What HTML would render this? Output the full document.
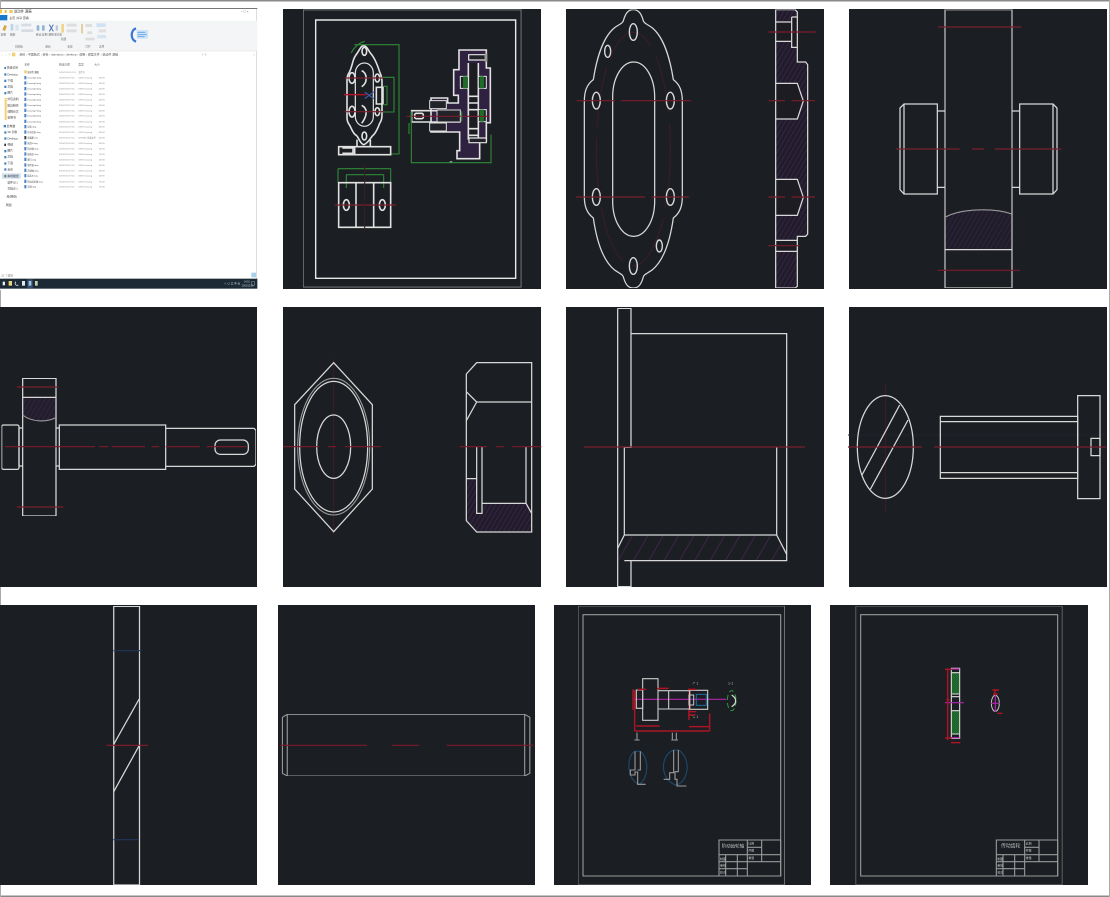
<!DOCTYPE html>
<html lang="zh"><head><meta charset="utf-8"><title>CAD</title>
<style>
html,body{margin:0;padding:0;background:#fff;width:1110px;height:897px;overflow:hidden}
svg{display:block;font-family:"Liberation Sans","Noto Sans CJK SC",sans-serif}
g.p *{vector-effect:non-scaling-stroke}
.bg{fill:#1b1e22}
.w{fill:none;stroke:#d8d8d8;stroke-width:1.25}
.g{fill:none;stroke:#9a9a9a;stroke-width:1.1}
.r{fill:none;stroke:#7a1c2c;stroke-width:1.2}
.rd{fill:none;stroke:#3a1f28;stroke-width:1.1}
.gn{fill:none;stroke:#2d8a35;stroke-width:1.1}
.b{fill:none;stroke:#24365e;stroke-width:1.2}
.blu{fill:none;stroke:#1d4a6e;stroke-width:1.1}
.m{fill:none;stroke:#b024a8;stroke-width:1.2}
.rb{fill:none;stroke:#a81226;stroke-width:1.5}
.h{fill:url(#hatch)}
.t{fill:#555;font-size:6.5px}
.t2{fill:#888;font-size:6.5px}
.tb{fill:#bbb;font-size:7.5px}
.p2 .w{stroke-width:1.6;stroke:#e2e2e2}
</style></head><body>
<svg width="1110" height="897" viewBox="0 0 1110 897" xmlns="http://www.w3.org/2000/svg">
<defs>
<pattern id="hatch" width="14" height="14" patternUnits="userSpaceOnUse" patternTransform="skewX(-30)"><rect width="14" height="14" fill="#221c2c"/><line x1="4" y1="0" x2="4" y2="14" stroke="#352646" stroke-width="3"/></pattern>
<pattern id="hatch2" width="46" height="46" patternUnits="userSpaceOnUse" patternTransform="skewX(-30)"><line x1="4" y1="0" x2="4" y2="46" stroke="#43264e" stroke-width="3"/></pattern>
<pattern id="gh" width="7" height="7" patternUnits="userSpaceOnUse"><rect width="7" height="7" fill="#1a5c28"/><path d="M0 7L7 0" stroke="#2c8a3c" stroke-width="1.5"/></pattern>
<filter id="bl" x="0" y="0" width="100%" height="100%"><feGaussianBlur stdDeviation="0.35"/></filter>
<filter id="bl2" x="0" y="0" width="100%" height="100%"><feGaussianBlur stdDeviation="0.3"/></filter>
</defs>
<rect width="1110" height="897" fill="#fff"/>
<!-- outer frame -->
<rect x="0" y="0" width="1110" height="1.5" fill="#8a8a8a"/>
<rect x="0" y="895.5" width="1110" height="1.5" fill="#8a8a8a"/>
<rect x="0" y="0" width="1" height="897" fill="#aaa"/>
<rect x="1109" y="0" width="1" height="897" fill="#aaa"/>

<!-- panels -->
<rect class="bg" x="283" y="9" width="258" height="280"/>
<rect class="bg" x="566" y="9" width="258" height="280"/>
<rect class="bg" x="849" y="9" width="258" height="280"/>
<rect class="bg" x="0" y="307" width="257" height="280"/>
<rect class="bg" x="283" y="307" width="258" height="280"/>
<rect class="bg" x="566" y="307" width="258" height="280"/>
<rect class="bg" x="849" y="307" width="258" height="280"/>
<rect class="bg" x="0" y="605" width="257" height="280"/>
<rect class="bg" x="278" y="605" width="257" height="280"/>
<rect class="bg" x="554" y="605" width="257" height="280"/>
<rect class="bg" x="830" y="605" width="258" height="280"/>

<!-- P1 explorer -->
<g transform="scale(.33333)" filter="url(#bl)">
<rect x="0" y="24" width="772" height="846" fill="#fff"/>
<rect x="0" y="24" width="772" height="3" fill="#777"/>
<rect x="768" y="27" width="3" height="810" fill="#ddd"/>
<rect x="0" y="28" width="6" height="12" fill="#f3c744"/><rect x="14" y="30" width="6" height="9" fill="#e9b83a"/><rect x="28" y="30" width="10" height="9" fill="#f1c75a"/>
<text x="42" y="38" style="font-size:10px;fill:#333">说动件 源稿</text>
<text x="722" y="38" style="font-size:9px;fill:#666">− ☐ ×</text>
<rect x="0" y="45" width="22" height="16" fill="#1979ca"/>
<text x="28" y="57" style="font-size:9px;fill:#444">主页 共享 查看</text>
<rect x="0" y="62" width="772" height="90" fill="#f4f5f6"/>
<rect x="0" y="152" width="772" height="2" fill="#e4e4e4"/>
<rect x="10" y="76" width="8" height="16" fill="#d9a441" transform="rotate(20 14 84)"/>
<rect x="32" y="72" width="8" height="20" fill="#bcd3ea"/><rect x="46" y="74" width="10" height="18" fill="#d7e4f1"/>
<rect x="64" y="71" width="30" height="8" fill="#d5dce4"/><rect x="64" y="88" width="36" height="8" fill="#d5dce4"/>
<rect x="110" y="76" width="8" height="16" fill="#8fb4d8"/><rect x="126" y="76" width="8" height="16" fill="#8fb4d8"/>
<path d="M148 74L160 94M160 74L148 94" stroke="#4a6fb0" stroke-width="3" fill="none"/>
<rect x="167" y="76" width="7" height="16" fill="#b9c9d9"/>
<rect x="184" y="72" width="8" height="26" fill="#f0d58a"/>
<rect x="200" y="71" width="30" height="9" fill="#dedede"/><rect x="200" y="88" width="30" height="9" fill="#dedede"/>
<rect x="243" y="72" width="6" height="28" fill="#e5cfa0"/>
<rect x="256" y="72" width="20" height="9" fill="#ddd"/><rect x="262" y="94" width="14" height="8" fill="#ddd"/><rect x="256" y="113" width="28" height="8" fill="#ddd"/>
<rect x="289" y="70" width="28" height="11" fill="#cfe2f4"/><rect x="296" y="88" width="22" height="9" fill="#e0e0e0"/><rect x="292" y="105" width="26" height="10" fill="#d8e4ee"/>
<text x="2" y="106" style="font-size:8px;fill:#666">复制</text><text x="30" y="106" style="font-size:8px;fill:#666">粘贴</text><text x="108" y="106" style="font-size:8px;fill:#666">移动 复制</text><text x="146" y="106" style="font-size:8px;fill:#666">删除</text><text x="163" y="106" style="font-size:8px;fill:#666">重命名</text><text x="183" y="120" style="font-size:8px;fill:#666">新建</text>
<text x="45" y="142" style="font-size:8px;fill:#777">剪贴板</text><text x="136" y="142" style="font-size:8px;fill:#777">组织</text><text x="202" y="142" style="font-size:8px;fill:#777">新建</text><text x="256" y="142" style="font-size:8px;fill:#777">打开</text><text x="297" y="142" style="font-size:8px;fill:#777">选择</text>
<!-- logo -->
<path d="M408 85C392 90 390 118 408 125" fill="none" stroke="#3a78d8" stroke-width="7"/>
<rect x="410" y="90" width="34" height="26" fill="#cfe3f6"/><path d="M412 97h24M412 104h28M412 110h22" stroke="#5ba2e0" stroke-width="2.5"/>
<!-- address -->
<text x="4" y="167" style="font-size:8px;fill:#999">← → ∨ ↑</text>
<rect x="36" y="158" width="10" height="11" fill="#f3d070"/>
<text x="58" y="167" style="font-size:9px;fill:#555">资料 › 中国版式 › 资料 › damiaotu › desktop › 说明 › 模型文件 › 说动件 源稿</text>
<text x="604" y="167" style="font-size:8px;fill:#888">∨ ↻</text><text x="760" y="167" style="font-size:8px;fill:#888">⌕</text>
<!-- sidebar -->
<rect x="6" y="520" width="56" height="16" fill="#cfe0ee"/>
<g style="font-size:8.5px;fill:#444">
<text x="20" y="206">快速访问</text><text x="22" y="226">Desktop</text><text x="22" y="244">下载</text><text x="22" y="262">文档</text><text x="22" y="281">图片</text><text x="22" y="300">外包资料</text><text x="22" y="319">模具制作</text><text x="22" y="337">课程论文</text><text x="22" y="355">说明书</text><text x="20" y="381">此电脑</text><text x="22" y="399">3D 对象</text><text x="22" y="418">Desktop</text><text x="22" y="436">视频</text><text x="22" y="455">图片</text><text x="22" y="473">文档</text><text x="22" y="492">下载</text><text x="22" y="511">音乐</text><text x="22" y="531">本地磁盘</text><text x="22" y="550">软件(D:)</text><text x="22" y="568">文档(E:)</text><text x="20" y="593">库(网络)</text><text x="18" y="618">网络</text>
</g>
<g fill="#3f7fc4"><rect x="13" y="201" width="5" height="6"/><rect x="13" y="220" width="6" height="7"/><rect x="13" y="239" width="6" height="7"/><rect x="13" y="257" width="6" height="7"/><rect x="13" y="276" width="6" height="7"/><rect x="11" y="375" width="7" height="7"/><rect x="13" y="394" width="6" height="7"/><rect x="13" y="412" width="6" height="7"/><rect x="13" y="431" width="5" height="7" fill="#333"/><rect x="13" y="450" width="6" height="7"/><rect x="13" y="468" width="6" height="7"/><rect x="13" y="487" width="6" height="7"/><rect x="13" y="505" width="6" height="7"/><rect x="13" y="525" width="6" height="7" fill="#777"/></g>
<g fill="#f3d070"><rect x="14" y="294" width="6" height="66"/></g>
<!-- columns -->
<g style="font-size:8px;fill:#666"><text x="73" y="196">名称</text><text x="177" y="196">修改日期</text><text x="235" y="196">类型</text><text x="283" y="196">大小</text></g>
<rect x="73" y="211" width="7" height="9" fill="#f3c95e"/>
<g fill="#4d84c8"><rect x="73" y="228" width="6" height="10"/><rect x="73" y="244" width="6" height="10"/><rect x="73" y="261" width="6" height="10"/><rect x="73" y="277" width="6" height="10"/><rect x="73" y="293" width="6" height="10"/><rect x="73" y="310" width="6" height="10"/><rect x="73" y="326" width="6" height="10"/><rect x="73" y="342" width="6" height="10"/><rect x="73" y="359" width="6" height="10"/><rect x="73" y="375" width="6" height="10"/><rect x="73" y="391" width="6" height="10"/><rect x="73" y="408" width="6" height="10" fill="#444"/><rect x="73" y="424" width="6" height="10"/><rect x="73" y="441" width="6" height="10"/><rect x="73" y="457" width="6" height="10"/><rect x="73" y="473" width="6" height="10"/><rect x="73" y="490" width="6" height="10"/><rect x="73" y="506" width="6" height="10"/><rect x="73" y="522" width="6" height="10"/><rect x="73" y="539" width="6" height="10"/><rect x="73" y="555" width="6" height="10"/></g>
<g class="t"><text x="82" y="219" style="fill:#333">说动件 源稿</text><text x="82" y="236">Drawing1.dwg</text><text x="82" y="252">Drawing2.dwg</text><text x="82" y="269">Drawing3.dwg</text><text x="82" y="285">Drawing4.dwg</text><text x="82" y="301">Drawing5.dwg</text><text x="82" y="318">Drawing6.dwg</text><text x="82" y="334">Drawing7.dwg</text><text x="82" y="350">Drawing8.dwg</text><text x="82" y="367">Drawing9.dwg</text><text x="82" y="383">齿轮.dwg</text><text x="82" y="399">传动齿轮.dwg</text><text x="82" y="416" style="fill:#333">总装配.exe</text><text x="82" y="432">端盖B.dwg</text><text x="82" y="449">阶动轴.dwg</text><text x="82" y="465">轴端盖.dwg</text><text x="82" y="481">螺钉.dwg</text><text x="82" y="498">零件图.dwg</text><text x="82" y="514">花键轴.dwg</text><text x="82" y="530">端盖A.dwg</text><text x="82" y="547">阶动齿轮轴.dwg</text><text x="82" y="563">花键.dwg</text></g>
<g class="t2"><text x="177" y="219">2019/12/14 12:51</text><text x="177" y="236">2009/12/10 9:45</text><text x="177" y="252">2009/12/10 9:45</text><text x="177" y="269">2009/12/10 9:45</text><text x="177" y="285">2009/12/10 9:45</text><text x="177" y="301">2009/12/10 9:45</text><text x="177" y="318">2009/12/10 9:45</text><text x="177" y="334">2009/12/10 9:45</text><text x="177" y="350">2009/12/10 9:45</text><text x="177" y="367">2009/12/10 9:45</text><text x="177" y="383">2019/12/14 9:45</text><text x="177" y="399">2019/12/14 9:45</text><text x="177" y="416">2019/12/14 9:45</text><text x="177" y="432">2019/12/14 9:45</text><text x="177" y="449">2019/12/14 9:45</text><text x="177" y="465">2019/12/14 9:45</text><text x="177" y="481">2019/12/14 9:45</text><text x="177" y="498">2009/12/10 9:45</text><text x="177" y="514">2019/12/14 9:45</text><text x="177" y="530">2019/12/14 9:45</text><text x="177" y="547">2019/12/14 9:45</text><text x="177" y="563">2019/12/14 9:45</text></g>
<g class="t2"><text x="235" y="219">文件夹</text><text x="235" y="236">DWG Drawing</text><text x="235" y="252">DWG Drawing</text><text x="235" y="269">DWG Drawing</text><text x="235" y="285">DWG Drawing</text><text x="235" y="301">DWG Drawing</text><text x="235" y="318">DWG Drawing</text><text x="235" y="334">DWG Drawing</text><text x="235" y="350">DWG Drawing</text><text x="235" y="367">DWG Drawing</text><text x="235" y="383">DWG Drawing</text><text x="235" y="399">DWG Drawing</text><text x="235" y="416">WinRAR 压缩文件</text><text x="235" y="432">DWG Drawing</text><text x="235" y="449">DWG Drawing</text><text x="235" y="465">DWG Drawing</text><text x="235" y="481">DWG Drawing</text><text x="235" y="498">DWG Drawing</text><text x="235" y="514">DWG Drawing</text><text x="235" y="530">DWG Drawing</text><text x="235" y="547">DWG Drawing</text><text x="235" y="563">DWG Drawing</text></g>
<g class="t2"><text x="296" y="236">46 KB</text><text x="296" y="252">46 KB</text><text x="296" y="269">46 KB</text><text x="296" y="285">46 KB</text><text x="296" y="301">46 KB</text><text x="296" y="318">46 KB</text><text x="296" y="334">46 KB</text><text x="296" y="350">46 KB</text><text x="296" y="367">46 KB</text><text x="296" y="383">46 KB</text><text x="296" y="399">46 KB</text><text x="296" y="416">46 KB</text><text x="296" y="432">46 KB</text><text x="296" y="449">46 KB</text><text x="296" y="465">75 KB</text><text x="296" y="481">46 KB</text><text x="296" y="498">46 KB</text><text x="296" y="514">46 KB</text><text x="296" y="530">46 KB</text><text x="296" y="547">75 KB</text><text x="296" y="563">75 KB</text></g>
<text x="4" y="829" style="font-size:8px;fill:#777">22 个项目</text>
<rect x="754" y="818" width="14" height="14" fill="#a8d0ea"/>
<!-- taskbar -->
<rect x="0" y="836" width="772" height="30" fill="#1e2a36"/>
<rect x="8" y="845" width="7" height="11" fill="#e8eef3"/>
<rect x="26" y="843" width="10" height="14" fill="#e9d47c"/>
<path d="M48 845a6 6 0 1 0 7 10" fill="none" stroke="#cfe0ee" stroke-width="2.5"/>
<rect x="66" y="843" width="9" height="14" fill="#e0e8f0"/>
<rect x="82" y="838" width="16" height="26" fill="#36506a"/><rect x="86" y="843" width="8" height="14" fill="#9cc6ea"/>
<rect x="105" y="843" width="8" height="14" fill="#c8d2b0"/>
<text x="672" y="854" style="font-size:8px;fill:#c8d0d8">∧ ⊙ 口 中 英</text>
<text x="732" y="848" style="font-size:7px;fill:#d0d8e0">14:51</text><text x="725" y="860" style="font-size:7px;fill:#d0d8e0">2019/12/28</text>
<rect x="755" y="845" width="8" height="11" fill="none" stroke="#9aa" stroke-width="1.5"/>
</g>

<!-- P2 assembly -->
<g class="p p2" transform="translate(283,8) scale(.33333)" filter="url(#bl2)">
<rect class="g" x="60" y="5" width="655" height="833" style="stroke:#7f8285;stroke-width:1.4"/>
<rect class="w" x="98" y="36" width="600" height="775" style="stroke-width:1.4;stroke:#e8e8e8"/>
<!-- left view -->
<path class="w" d="M242 113C234 113 232 122 226 130C222 138 214 144 210 160C205 178 203 188 196 198C191 206 192 215 192 225L192 330C192 340 195 345 200 352C206 362 210 378 220 382C228 390 232 408 242 410C252 408 262 392 268 384C280 375 285 358 290 346C296 338 297 330 297 320L297 222C297 212 294 200 290 192C285 176 276 150 262 135C256 126 250 113 242 113Z"/>
<rect class="w" x="217" y="165" width="54" height="190" rx="27" ry="30" style="stroke-width:1.2"/>
<path class="w" d="M236 188C254 196 254 226 236 236M236 292C254 300 254 322 236 346"/>
<g class="w"><ellipse cx="207" cy="210" rx="9" ry="16"/><ellipse cx="283" cy="210" rx="7" ry="12"/><ellipse cx="207" cy="311" rx="9" ry="16"/><ellipse cx="283" cy="311" rx="7" ry="12"/><ellipse cx="244" cy="130" rx="7" ry="12"/><ellipse cx="244" cy="384" rx="7" ry="12"/></g>
<path class="r" d="M185 210H300M185 311H300"/><path class="rb" d="M183 260H250"/>
<path class="b" d="M245 252L272 272M245 272L272 252" style="stroke:#3a5aa8"/>
<rect class="w" x="280" y="238" width="20" height="50"/>
<path class="gn" d="M214 110H348V438H325M300 208H333V312H300M300 235H312V290H300M205 135C212 118 228 105 245 100"/>
<rect class="w" x="167" y="416" width="156" height="24"/>
<path class="w" d="M222 416V395M262 416V395M215 416V440M178 420H210V436H178"/>
<!-- bottom view -->
<path class="gn" d="M165 482H323M190 500H302M190 500V540M302 500V540M165 482V524M323 482V524"/>
<rect class="w" x="167" y="524" width="156" height="134"/>
<path class="w" d="M219 524V658M272 524V658"/>
<ellipse class="w" cx="190" cy="591" rx="9" ry="16"/><ellipse class="w" cx="298" cy="591" rx="9" ry="16"/>
<path class="r" d="M155 591H340"/><path class="rd" d="M245 470V670"/>
<!-- right section -->
<path fill="#2f2140" d="M528 126H610V180H622V344H610V400H590V452H522V428H530V372H444V270H494V285H526V262H512V185H528Z"/>
<path fill="#1b1e22" d="M556 165H586V395H556Z"/>
<path class="w" d="M528 126H610V180H622V344H610V400H590V452H522V428H530V372H444V270H494V285H526V262H512V185H528Z"/>
<path class="w" d="M556 165V395M586 165V395M556 265H586M556 285H586M556 305H586M556 362H586M556 382H586"/>
<rect x="557" y="140" width="50" height="16" style="fill:#22242a;stroke:#e4e4e4;stroke-width:1.2"/>
<rect x="605" y="136" width="8" height="26" fill="#9a9a9a"/>
<rect style="fill:#22242a;stroke:#e4e4e4;stroke-width:1.2" x="558" y="390" width="52" height="14"/>
<rect x="532" y="205" width="24" height="36" fill="#22242a" stroke="#e4e4e4"/><rect x="540" y="205" width="13" height="36" fill="#1e6e28"/>
<rect x="586" y="205" width="24" height="36" fill="#22242a" stroke="#e4e4e4"/><rect x="590" y="205" width="13" height="36" fill="#1e6e28"/>
<rect x="586" y="305" width="24" height="36" fill="#22242a" stroke="#e4e4e4"/><rect x="590" y="305" width="13" height="36" fill="#1e6e28"/>
<rect x="440" y="278" width="50" height="24" fill="#22242a" stroke="#ddd"/><rect x="440" y="345" width="50" height="24" fill="#22242a" stroke="#ddd"/>
<path fill="#1b1e22" class="w" d="M386 308H530V342H386Z"/>
<rect class="w" x="395" y="316" width="26" height="16" rx="5"/>
<rect x="462" y="306" width="70" height="36" fill="#22242a" stroke="#ddd"/>
<path class="r" d="M370 325H620"/>
<path class="gn" d="M385 310V466M385 464H624M624 380V466M378 345V378M536 310V340"/>
<rect x="500" y="460" width="8" height="3" fill="#bbb"/>
</g>

<!-- P3 flange -->
<g class="p" transform="translate(565,8) scale(.33333)" filter="url(#bl2)">
<path class="w" d="M205 5C190 5 182 15 176 35C175 45 165 48 150 58C115 85 95 150 85 215C65 230 58 250 58 280L58 565C58 595 65 615 85 630C95 700 115 760 150 787C165 797 175 800 176 810C182 830 190 840 205 840C220 840 228 830 234 810C235 800 245 797 260 787C295 760 315 700 325 630C345 615 352 595 352 565L352 280C352 250 345 230 325 215C315 150 295 85 260 58C245 48 235 45 234 35C228 15 220 5 205 5Z"/>
<ellipse class="rd" cx="205" cy="423" rx="111" ry="350" stroke-dasharray="60 10"/>
<rect class="w" x="143" y="162" width="126" height="523" rx="63" ry="105"/>
<g class="w" style="stroke-width:1.4"><ellipse cx="205" cy="72" rx="12" ry="25"/><ellipse cx="128" cy="130" rx="9" ry="18"/><ellipse cx="94" cy="278" rx="12" ry="25"/><ellipse cx="316" cy="278" rx="12" ry="25"/><ellipse cx="94" cy="567" rx="12" ry="25"/><ellipse cx="316" cy="567" rx="12" ry="25"/><ellipse cx="283" cy="714" rx="9" ry="18"/><ellipse cx="205" cy="774" rx="12" ry="25"/></g>
<path class="r" d="M35 278H150M168 278H378M33 567H240M260 567H372"/>
<path class="h" d="M632 5H690L697 12V162H722L728 170V678L722 685H697V835L690 840H632Z"/>
<path class="bg" d="M632 42H680V27H697V118H680V100H632ZM632 226H697L715 279L697 333H632ZM632 514H697L715 568L697 622H632ZM632 697H697V730H632Z"/>
<path class="w" d="M632 5H690L697 12V162H722L728 170V678L722 685H697V835L690 840H632ZM632 42H680M632 100H680M680 27H697M680 27V118H697M632 226H697L715 279L697 333H632M632 514H697L715 568L697 622H632M632 697H697M632 730H697"/>
<path class="r" d="M610 72H752M610 278H660M680 278H750M610 567H660M680 567H750M610 713H702"/>
</g>

<!-- P4 -->
<g class="p" transform="translate(848,8) scale(.33333)" filter="url(#bl2)">
<path class="h" d="M291 628C340 600 440 600 492 618V725H291Z" style="opacity:.7"/>
<rect class="w" x="291" y="5" width="201" height="835" style="stroke:#b0b0b0;stroke-width:1.4"/>
<path class="g" d="M291 628C340 600 440 600 492 618"/>
<path class="w" d="M291 725H492"/>
<path class="w" d="M268 309V538M268 309H291M268 538H291M168 288H268V558H168L156 545V300ZM168 288V558"/>
<path class="w" d="M515 309V538M492 309H515M492 538H515M515 288H615L627 300V545L615 558H515ZM615 288V558"/>
<path class="r" d="M143 423H335M372 423H408M440 423H640M270 57H520M268 787H515"/>
</g>

<!-- P5 shaft -->
<g class="p" transform="translate(0,305) scale(.33333)" filter="url(#bl2)">
<path class="h" d="M68 280H168V338C140 352 95 352 68 330Z" style="opacity:.9"/>
<rect class="w" x="68" y="220" width="100" height="413"/>
<path class="w" d="M68 277H168"/><path class="g" d="M68 330C95 352 140 352 168 338"/>
<rect class="w" x="5" y="360" width="52" height="133" rx="5"/><path class="w" d="M57 369H68M57 483H68M168 369H178M168 483H178M57 369V483"/>
<rect class="w" x="178" y="360" width="319" height="133"/>
<path class="w" d="M497 370H762L768 376V478L762 484H497"/>
<rect class="w" x="645" y="405" width="100" height="43" rx="16"/>
<path class="r" d="M15 425H285M298 425H325M335 425H435M455 425H478M497 425H600M620 425H740M50 246H175M50 606H190"/>
</g>

<!-- P6 nut -->
<g class="p" transform="translate(283,305) scale(.33333)" filter="url(#bl2)">
<path class="rd" d="M152 160V690"/>
<polygon class="w" points="152,173 268,299 268,552 152,680 35,552 35,299"/>
<ellipse class="g" cx="152" cy="425" rx="108" ry="205"/>
<ellipse class="w" cx="152" cy="425" rx="102" ry="196"/>
<ellipse class="w" cx="152" cy="425" rx="51" ry="95"/>
<path class="r" d="M0 425H108M135 425H160M185 425H293"/>
<path class="h" d="M550 521H581V625H597V595H729L746 625V681H581L550 647Z"/>
<path class="w" d="M550 207L581 173H746V681H581L550 647ZM581 291H746M550 260L581 291L550 347"/>
<path class="w" d="M581 425V625H597V425M729 425V595H597M729 595L746 625M550 521H581"/>
<path class="r" d="M530 425H612M640 425H664M688 425H775"/>
</g>

<!-- P7 -->
<g class="p" transform="translate(565,305) scale(.33333)" filter="url(#bl2)">
<path fill="url(#hatch2)" d="M178 690H635L665 748V767H198H178L158 805V730Z"/>
<path class="w" d="M158 10H198V427H178V690H635V427M198 86H665V767H198V845H158V10"/>
<path class="w" d="M178 690L158 730M635 690L665 748M178 767H198"/>
<path class="r" d="M57 426H720"/>
</g>

<!-- P8 -->
<g class="p" transform="translate(848,305) scale(.33333)" filter="url(#bl2)">
<path d="M0 390H775" fill="none" stroke="#24282e" stroke-width="1"/>
<path class="rd" d="M112 235V620"/>
<ellipse class="w" cx="112" cy="426" rx="84" ry="154"/>
<path class="w" d="M155 300L42 510M180 345L67 553"/>
<rect class="w" x="277" y="334" width="412" height="186"/>
<path class="w" d="M277 350H689M277 503H689"/>
<rect class="w" x="689" y="272" width="67" height="309"/>
<rect class="w" x="729" y="400" width="27" height="52"/>
<path class="r" d="M0 426H222M258 426H775"/>
</g>

<!-- P9 -->
<g class="p" transform="translate(0,600) scale(.3436,.33333)" filter="url(#bl2)">
<rect class="w" x="331" y="19" width="75" height="836"/>
<path class="w" d="M331 433L405 297M331 575L405 437"/>
<path class="r" d="M310 436H430" style="stroke:#8a1c2c"/>
<path class="b" d="M330 152H412M330 719H404"/>
</g>

<!-- P10 -->
<g class="p" transform="translate(0,600) scale(.3436,.33333)" filter="url(#bl2)">
<path class="g" d="M836 343H1527L1542 352V520L1527 528H836L822 520V352ZM836 343V528M1527 343V528"/>
<path class="r" d="M815 436H1068M1140 436H1220M1300 436H1553"/>
</g>

<!-- P11 -->
<g class="p" transform="translate(553,600) scale(.33333)" filter="url(#bl2)">
<rect class="g" x="75" y="18" width="620" height="837" style="stroke:#77797c"/>
<rect class="g" x="90" y="44" width="593" height="784"/>
<path class="m" d="M240 298H520"/>
<path class="rb" d="M245 270V393M245 393H470M250 378H320M408 380H470M470 340V393M408 265V360M316 265H347"/>
<rect class="g" x="250" y="270" width="19" height="55" style="stroke:#ccc"/>
<rect class="g" x="269" y="236" width="46" height="125" style="stroke:#ccc"/>
<path class="g" style="stroke:#ccc" d="M315 272H410V327H315M347 272V327"/>
<rect class="g" x="410" y="271" width="54" height="57" style="stroke:#ccc"/>
<rect x="430" y="283" width="30" height="33" fill="none" stroke="#1d6ea8"/>
<rect x="408" y="285" width="14" height="30" fill="none" stroke="#c8c8c8"/>
<path class="rb" d="M405 268H430M405 335H430M405 345H428M312 266H325M255 268H280M240 268V330"/>
<ellipse cx="536" cy="302" rx="13" ry="30" fill="none" stroke="#2a9a3c" stroke-dasharray="5 3"/>
<path class="w" d="M536 285C552 295 552 310 536 320"/>
<text x="525" y="254" style="font-size:11px;fill:#bbb">1-1</text>
<text x="416" y="254" style="font-size:11px;fill:#bbb">↗ 1</text>
<text x="416" y="354" style="font-size:11px;fill:#bbb">↘ 1</text>
<path class="g" d="M252 398V420M244 420H260M358 398V420M370 398V420M355 420H375"/>
<path class="blu" d="M246 454C220 466 220 540 258 553C286 540 290 474 262 454Z"/>
<path class="blu" d="M362 450C320 466 320 540 370 556C412 540 412 470 376 450Z"/>
<path class="g" d="M246 454V510H232V525H246V516H254V553H278M262 454V510H254M362 450V518H350V538H332M376 450V515H366V538H372V558H400"/>
<rect class="g" x="498" y="720" width="185" height="108"/>
<path class="g" d="M583 720V828M626 720V785M583 742H626M498 764H683M498 785H683M498 806H583M553 764V828M518 764V828"/>
<text x="506" y="743" class="tb" style="font-size:14px;letter-spacing:-.5px">阶动齿轮轴</text>
<g style="font-size:9px;fill:#ccc"><text x="586" y="734">比例</text><text x="586" y="755">件数</text><text x="586" y="777">重量</text><text x="501" y="780">制图</text><text x="501" y="799">审核</text><text x="501" y="820">校对</text></g>
</g>

<!-- P12 -->
<g class="p" transform="translate(829,600) scale(.33333)" filter="url(#bl2)">
<rect class="g" x="80" y="18" width="620" height="837" style="stroke:#77797c"/>
<rect class="g" x="95" y="44" width="591" height="784"/>
<rect x="367" y="218" width="25" height="64" fill="url(#gh)"/>
<rect x="367" y="332" width="25" height="70" fill="url(#gh)"/>
<rect class="g" x="367" y="205" width="25" height="210" style="stroke:#ddd"/>
<path class="g" style="stroke:#ddd" d="M367 218H392M367 282H392M367 290H392M367 332H392M367 402H392"/>
<path class="m" d="M367 207H392M367 413H392M348 308H405"/>
<path class="rb" d="M356 205V420M348 208H368M348 414H368M366 428H394M352 300H362"/>
<ellipse cx="499" cy="310" rx="12" ry="24" fill="none" stroke="#c8c8c8"/>
<path class="m" d="M499 284V336M486 310H512"/>
<path class="rb" d="M490 270H510M492 282H506M505 340H520M498 268V285"/>
<rect class="g" x="502" y="720" width="184" height="108"/>
<path class="g" d="M587 720V828M630 720V785M587 742H630M502 764H686M502 785H686M502 806H587M557 764V828M522 764V828"/>
<text x="516" y="742" class="tb" style="font-size:15px;letter-spacing:-.5px">传动齿轮</text>
<g style="font-size:9px;fill:#ccc"><text x="590" y="734">比例</text><text x="590" y="755">件数</text><text x="590" y="777">重量</text><text x="505" y="780">制图</text><text x="505" y="799">审核</text><text x="505" y="820">校对</text></g>
</g>
</svg>
</body></html>
